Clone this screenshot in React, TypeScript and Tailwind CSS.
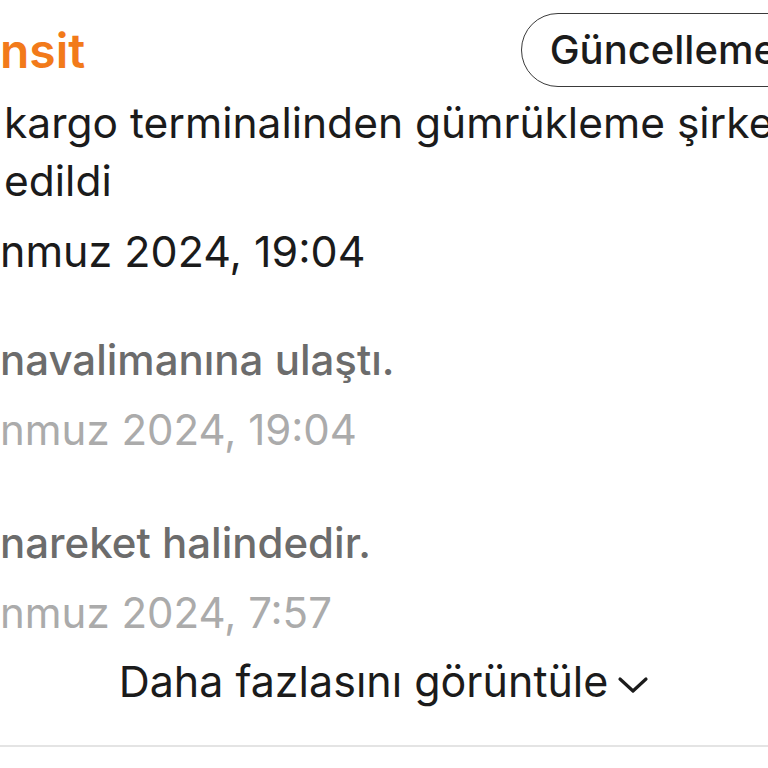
import { useState } from "react";

type Olay = { baslik: string, tarih: string, ust: string }

const olaylar: Olay[] = [
    { baslik: "navalimanına ulaştı.", tarih: "nmuz 2024, 19:04", ust: "mt-[55px]" },
    { baslik: "nareket halindedir.", tarih: "nmuz 2024, 7:57", ust: "mt-[63px]" },
]

function Chevron() {
    return <svg width="32" height="18" viewBox="0 0 32 18" fill="none" className="ml-[9px] mt-[25px]">
        <path d="M3 3 L16 15 L29 3" stroke="#1b1b1b" strokeWidth="3.2" strokeLinecap="round" strokeLinejoin="round" />
    </svg>
}

function App() {
    const [acik, setAcik] = useState<boolean>(false)
    const Row = (props: Olay) => <div className={`${props.ust} whitespace-nowrap`}>
        <p className="text-[42px] leading-[50px] font-medium text-[#6c6c6c]">{props.baslik}</p>
        <p className="mt-[20px] text-[42px] leading-[50px] text-[#ababab]">{props.tarih}</p>
    </div>
    return <div className="w-[768px] h-[768px] overflow-hidden bg-white text-[#1b1b1b]" style={{ fontFamily: "Inter, 'Noto Sans', sans-serif" }}>
        <header className="flex justify-between items-start h-[94px]">
            <h1 className="mt-[26px] text-[48px] leading-[50px] font-semibold text-[#f27a1a]">nsit</h1>
            <button className="mt-[13px] -mr-[99px] h-[74px] rounded-full border-[1.5px] border-[#3a3a3a] pl-[28px] pr-[40px] text-[40px] font-medium whitespace-nowrap">
                Güncellemeler
            </button>
        </header>
        <section className="whitespace-nowrap">
            <p className="pl-[4px] text-[42.5px] leading-[58px]">kargo terminalinden gümrükleme şirketine teslim</p>
            <p className="pl-[4px] text-[42.5px] leading-[58px]">edildi</p>
            <p className="mt-[12px] text-[43px] leading-[58px]">nmuz 2024, 19:04</p>
        </section>
        {
            olaylar.map((e: Olay) => <Row key={e.tarih} {...e} />)
        }
        <button className="mx-auto mt-[13px] flex items-start" onClick={() => (setAcik(!acik))}>
            <span className="text-[43px] leading-[60px]">Daha fazlasını görüntüle</span>
            <Chevron />
        </button>
        <div className="mt-[34px] border-t-2 border-[#e4e4e4]" />
    </div>
}
export default App
